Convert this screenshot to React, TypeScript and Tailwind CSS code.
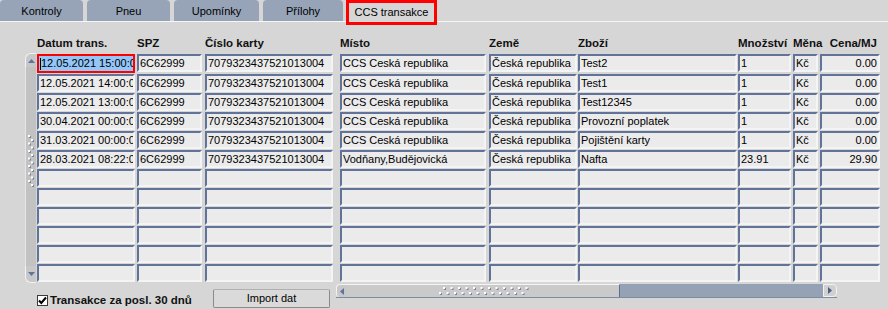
import React from "react";

const cols = [
  { cls: "w-[98px]", head: "Datum trans.", right: false },
  { cls: "ml-[2px] w-[65px]", head: "SPZ", right: false },
  { cls: "ml-[3px] w-[128px]", head: "Číslo karty", right: false },
  { cls: "ml-[7px] w-[146px]", head: "Místo", right: false },
  { cls: "ml-[3px] w-[88px]", head: "Země", right: false },
  { cls: "ml-[1px] w-[159px]", head: "Zboží", right: false },
  { cls: "ml-[1px] w-[53px]", head: "Množství", right: false },
  { cls: "ml-[2px] w-[25px]", head: "Měna", right: false },
  { cls: "ml-[2px] w-[60px]", head: "Cena/MJ", right: true },
];

const data: string[][] = [
  ["12.05.2021 15:00:00", "6C62999", "7079323437521013004", "CCS Ceská republika", "Česká republika", "Test2", "1", "Kč", "0.00"],
  ["12.05.2021 14:00:00", "6C62999", "7079323437521013004", "CCS Ceská republika", "Česká republika", "Test1", "1", "Kč", "0.00"],
  ["12.05.2021 13:00:00", "6C62999", "7079323437521013004", "CCS Ceská republika", "Česká republika", "Test12345", "1", "Kč", "0.00"],
  ["30.04.2021 00:00:00", "6C62999", "7079323437521013004", "CCS Ceská republika", "Česká republika", "Provozní poplatek", "1", "Kč", "0.00"],
  ["31.03.2021 00:00:00", "6C62999", "7079323437521013004", "CCS Ceská republika", "Česká republika", "Pojištění karty", "1", "Kč", "0.00"],
  ["28.03.2021 08:22:00", "6C62999", "7079323437521013004", "Vodňany,Budějovická", "Česká republika", "Nafta", "23.91", "Kč", "29.90"],
];

const rows: string[][] = [...data, ...Array.from({ length: 6 }, () => Array(9).fill(""))];

const tabs = [
  { label: "Kontroly", w: "w-[83px]" },
  { label: "Pneu", w: "w-[83px]" },
  { label: "Upomínky", w: "w-[85px]" },
  { label: "Přílohy", w: "w-[80px]" },
];

function Dots({ cols: n, vertical }: { cols: number; vertical?: boolean }) {
  const items = [];
  for (let i = 0; i < n; i++) {
    for (let j = 0; j < 2; j++) {
      const x = vertical ? 1 + j * 3 : i * 7.5 + (j === 0 ? 4 : 0);
      const y = vertical ? i * 7.5 + (j === 0 ? 0 : 4) : j * 5;
      items.push(
        <g key={`${i}-${j}`}>
          <rect x={x + 1} y={y + 1} width={2} height={2} fill="#7b869a" />
          <rect x={x} y={y} width={2} height={2} fill="#ffffff" />
        </g>
      );
    }
  }
  return (
    <svg
      width={vertical ? 8 : n * 7.5 + 4}
      height={vertical ? n * 7.5 + 4 : 9}
      className="block"
    >
      {items}
    </svg>
  );
}

function Cell({ col, text, selected }: { col: (typeof cols)[number]; text: string; selected?: boolean }) {
  if (selected) {
    return (
      <div
        className={`${col.cls} relative h-[19px] shrink-0 overflow-hidden whitespace-nowrap border-2 border-[#ff0000] bg-[#94c6f8] pl-[2px] text-[11px] leading-[15px] text-black`}
      >
        <span className="absolute left-[1px] top-[2px] h-[12px] w-px bg-black" />
        {text}
      </div>
    );
  }
  return (
    <div
      className={`${col.cls} h-[18px] shrink-0 overflow-hidden whitespace-nowrap border-2 border-t-[#62739a] border-l-[#62739a] border-r-[#f4f4f4] border-b-[#f4f4f4] bg-[#ebebeb] px-[1px] text-[11px] leading-[14px] text-black ${
        col.right ? "text-right" : ""
      }`}
    >
      {text}
    </div>
  );
}

export default function App() {
  return (
    <div className="flex h-[309px] w-[888px] flex-col overflow-hidden bg-[#d6d6d6] font-['Liberation_Sans',Arial,sans-serif] text-black">
      {/* tabs */}
      <div className="relative z-10 flex h-[21px] items-start gap-[4px]">
        {tabs.map((t) => (
          <div
            key={t.label}
            className={`${t.w} flex h-[21px] items-center justify-center rounded-t-[4px] bg-[#97a4b8] pt-[2px] text-[11px]`}
          >
            {t.label}
          </div>
        ))}
        <div className="-ml-[1px] flex h-[25px] w-[91px] items-center justify-center border-[3px] border-[#ff0000] bg-[#d6d6d6] pb-[1px] text-[11px]">
          CCS transakce
        </div>
      </div>
      <div className="h-px bg-[#f6f6f6]" />

      {/* header */}
      <div className="flex h-[32px] items-end pb-[4px] pl-[37px]">
        {cols.map((c) => (
          <div
            key={c.head}
            className={`${c.cls} shrink-0 whitespace-nowrap text-[11.5px] font-bold leading-[14px] text-[#111] ${
              c.right ? "pr-[3px] text-right" : ""
            }`}
          >
            {c.head}
          </div>
        ))}
      </div>

      {/* table */}
      <div className="flex">
        <div className="-mt-px ml-[25px] flex h-[230px] w-[11px] shrink-0 flex-col">
          <div className="flex h-[14px] items-center justify-center rounded-tl-[6px] border-l border-t border-[#f2f2f2] bg-[#c8c8c8]">
            <svg width="7" height="4">
              <path d="M0 4 L3.5 0 L7 4 Z" fill="#62739a" />
            </svg>
          </div>
          <div className="flex flex-1 flex-col border-l border-[#e6e6e6] bg-[#c2c2c2]">
            <div className="ml-[1px] mt-[68px]">
              <Dots cols={7} vertical />
            </div>
          </div>
          <div className="flex h-[17px] items-center justify-center rounded-bl-[6px] border-b border-l border-[#f2f2f2] bg-[#c8c8c8]">
            <svg width="7" height="4">
              <path d="M0 0 L3.5 4 L7 0 Z" fill="#62739a" />
            </svg>
          </div>
        </div>
        <div className="ml-[1px] flex flex-col gap-px">
          {rows.map((r, i) => (
            <div key={i} className="flex">
              {cols.map((c, j) => (
                <Cell key={j} col={c} text={r[j]} selected={i === 0 && j === 0} />
              ))}
            </div>
          ))}
        </div>
      </div>

      {/* bottom */}
      <div className="mt-px flex items-start">
        <div className="flex w-[213px] shrink-0 items-center pl-[37px] pt-[9px]">
          <svg width="11" height="11" className="shrink-0">
            <rect x="0.5" y="0.5" width="10" height="10" fill="#ffffff" stroke="#3a3a3a" />
            <path d="M2 5.5 L4.3 8 L9 2.5" fill="none" stroke="#000" strokeWidth="2" />
          </svg>
          <span className="ml-[2px] whitespace-nowrap text-[11.5px] font-bold leading-[14px] text-[#111]">
            Transakce za posl. 30 dnů
          </span>
        </div>
        <button
          type="button"
          className="mt-[5px] flex h-[19px] w-[117px] shrink-0 items-center justify-center rounded-[2px] border border-[#8a8a8a] border-t-[#b0b0b0] bg-[#dadada] text-[11px] leading-[13px] text-black"
        >
          Import dat
        </button>
        <div className="ml-[6px] flex h-[14px] w-[501px] shrink-0 border-b border-[#7d8aa0]">
          <div className="flex w-[11px] items-center justify-center rounded-l-[4px] border-l border-t border-[#f2f2f2] bg-[#c8c8c8]">
            <svg width="4" height="7">
              <path d="M4 0 L0 3.5 L4 7 Z" fill="#62739a" />
            </svg>
          </div>
          <div className="flex w-[273px] items-center justify-center border-r border-t border-r-[#5f6f8f] border-t-[#f4f4f4] bg-[#cacaca] pl-[6px]">
            <Dots cols={12} />
          </div>
          <div className="flex-1 bg-[#95a2b6]" />
          <div className="flex w-[14px] items-center justify-center rounded-r-[4px] border border-[#f2f2f2] bg-[#d0d0d0]">
            <svg width="4" height="7">
              <path d="M0 0 L4 3.5 L0 7 Z" fill="#4e5f80" />
            </svg>
          </div>
        </div>
      </div>
    </div>
  );
}
